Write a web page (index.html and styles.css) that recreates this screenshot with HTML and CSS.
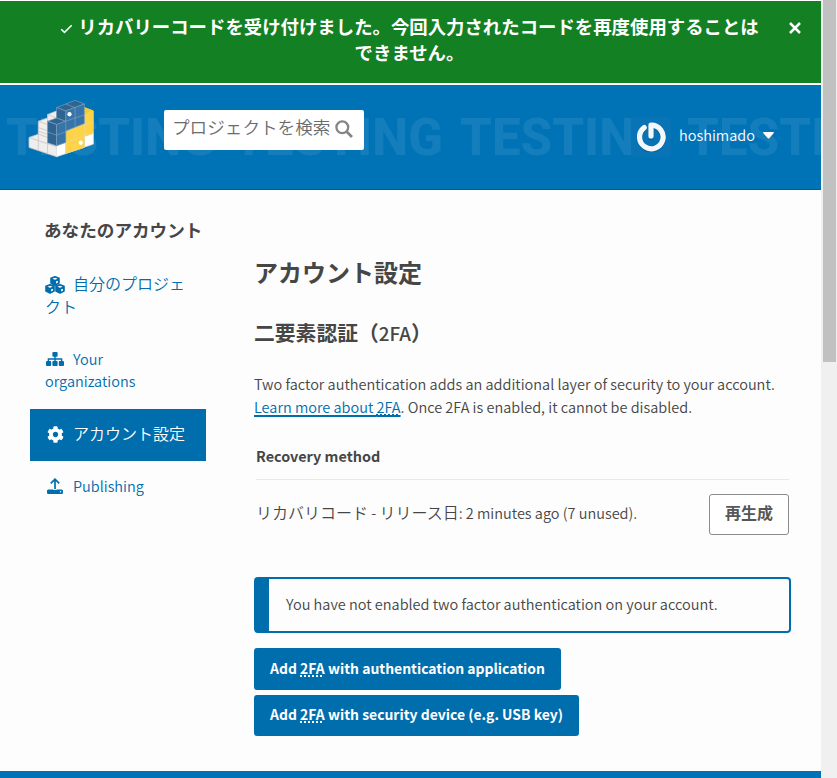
FILE: index.html
```html
<!DOCTYPE html>
<html lang="ja">
<head>
<meta charset="utf-8">
<title>アカウント設定</title>
<link rel="stylesheet" href="styles.css">
</head>
<body>
<div class="page">
  <div class="banner">
    <div class="banner-text"><svg class="check" viewBox="0 0 12 10"><path d="M.7 5.2 4 8.4 11.2 1.3" fill="none" stroke="#fff" stroke-width="1.6"/></svg>リカバリーコードを受け付けました。今回入力されたコードを再度使用することは<br>できません。</div>
    <svg class="close" viewBox="0 0 12 12"><path d="M1 1 11 11M11 1 1 11" stroke="#fff" stroke-width="2.5"/></svg>
  </div>
  <header class="header">
    <div class="watermark" aria-hidden="true"><span>TESTING</span><span>TESTING</span><span>TESTING</span><span>TESTING</span></div>
    <svg class="logo" viewBox="24 27 202 176">
      <g stroke="#c5c5c9" stroke-width="2.4" stroke-linejoin="round">
        <path fill="#efeeec" d="M27 142 55 132V93L83 83V73L110 62V200L27 172Z"/>
        <path fill="#fff" stroke="#e4e4e4" d="M110 167 221 129V162L110 200Z"/>
        <path fill="#ffd343" stroke="#f3d36c" d="M138 124 194 100V52L221 62V129L194 138V172L138 190Z"/>
        <path fill="#f7c92b" stroke="none" d="M194 51 221 61 194 71Z"/>
        <path fill="none" d="M27 142 110 170M55 132 83 142M55 132V181M55 93 83 103M83 73 110 83M55 112 83 122M83 73V191M55 123 83 133"/>
        <path fill="none" stroke="#e8d9a0" stroke-width="2" d="M138 157 221 129M166 112V181M194 71V172M194 105 221 96M138 124V190"/>
        <g stroke="#7d9fbd" stroke-width="2">
        <path fill="#2f6491" d="M83 93 110 83 138 93 110 103ZM110 52 166 30 194 41 138 62Z"/>
        <path fill="#2f6491" d="M83 93 110 103V167L83 158ZM110 52 138 62V93L110 83Z"/>
        <path fill="#3775a9" d="M110 103 138 93V62L194 41V100L138 122V157L110 167Z"/>
        <path fill="none" d="M83 126 110 135 138 125M138 41 166 52V111M138 93 194 74M138 93V124"/>
        </g>
      </g>
      <circle cx="149" cy="72" r="6.5" fill="#fff"/><circle cx="183" cy="158" r="6.5" fill="#fff"/>
    </svg>
    <div class="search"><span>プロジェクトを検索</span><svg viewBox="0 0 18 18"><circle cx="7.3" cy="7.3" r="5.9" fill="none" stroke="#858585" stroke-width="2.3"/><path d="m11.5 11.5 5.5 5.5" stroke="#858585" stroke-width="2.6"/></svg></div>
    <div class="user">
      <div class="avatar"><svg viewBox="0 0 30 30"><path d="M8.2 5.6A11.8 11.8 0 1 0 15 3.2V14.5" transform="translate(0 1)" fill="none" stroke="#0a5a90" stroke-opacity=".5" stroke-width="5.6" stroke-linecap="round"/><path d="M8.2 5.6A11.8 11.8 0 1 0 15 3.2V14" fill="none" stroke="#f6f7f8" stroke-width="5.2" stroke-linecap="round" stroke-linejoin="round"/></svg></div>
      <span class="name">hoshimado</span>
      <svg class="caret" viewBox="0 0 11 7"><path d="M.8 0H10.2Q11.4.3 10.6 1.2L6.2 6.2Q5.5 6.8 4.8 6.2L.4 1.2Q-.4.3.8 0Z" fill="#fff"/></svg>
    </div>
  </header>
  <div class="content">
    <nav class="sidebar">
      <h3>あなたのアカウント</h3>
      <a class="projects"><svg class="icon cubes" viewBox="0 0 20 18"><g fill="#006dad" stroke="#006dad" stroke-width="1.6" stroke-linejoin="round"><path d="M10 .8 14 2.3V7L10 9 6 7V2.3ZM5 8.8 9 10.3V15L5 17 1 15V10.3ZM15 8.8 19 10.3V15L15 17 11 15V10.3Z"/></g><g fill="#fdfdfd"><path d="M10 1.7 12.6 2.7 10 3.7 7.4 2.7ZM5 9.7 7.6 10.7 5 11.7 2.4 10.7ZM15 9.7 17.6 10.7 15 11.7 12.4 10.7ZM11 5.6 13 4.8V6.5L11 7.5ZM6 13.6 8 12.8V14.5L6 15.5ZM16 13.6 18 12.8V14.5L16 15.5Z"/></g></svg><span class="ja">自分のプロジェクト</span></a>
      <a class="orgs"><svg class="icon org" viewBox="0 0 18 14"><g fill="#006dad"><rect x="6.4" width="5.2" height="4.8" rx="1"/><rect y="9" width="5.2" height="5" rx="1"/><rect x="6.4" y="9" width="5.2" height="5" rx="1"/><rect x="12.8" y="9" width="5.2" height="5" rx="1"/></g><path d="M9 4V10M2.4 10V7H15.6V10" fill="none" stroke="#006dad" stroke-width="1.4"/></svg>Your organizations</a>
      <a class="active"><svg class="icon cog" viewBox="0 0 512 512"><path fill="#fff" d="M487.4 315.7l-42.6-24.6c4.3-23.2 4.3-47 0-70.2l42.6-24.6c4.9-2.8 7.1-8.6 5.5-14-11.1-35.6-30-67.8-54.7-94.6-3.8-4.1-10-5.1-14.8-2.3L380.8 110c-17.9-15.4-38.5-27.3-60.8-35.1V25.8c0-5.6-3.9-10.5-9.4-11.7-36.7-8.2-74.3-7.8-109.2 0-5.5 1.2-9.4 6.1-9.4 11.7V75c-22.2 7.9-42.8 19.8-60.8 35.1L88.7 85.5c-4.9-2.8-11-1.9-14.8 2.3-24.7 26.7-43.6 58.9-54.7 94.6-1.7 5.4.6 11.2 5.5 14L67.3 221c-4.3 23.2-4.3 47 0 70.2l-42.6 24.6c-4.9 2.8-7.1 8.6-5.5 14 11.1 35.6 30 67.8 54.7 94.6 3.8 4.1 10 5.1 14.8 2.3l42.6-24.6c17.9 15.4 38.5 27.3 60.8 35.1v49.2c0 5.6 3.9 10.5 9.4 11.7 36.7 8.2 74.3 7.8 109.2 0 5.5-1.2 9.4-6.1 9.4-11.7v-49.2c22.2-7.9 42.8-19.8 60.8-35.1l42.6 24.6c4.9 2.8 11 1.9 14.8-2.3 24.7-26.7 43.6-58.9 54.7-94.6 1.5-5.5-.7-11.3-5.6-14.1zM256 336c-44.1 0-80-35.9-80-80s35.9-80 80-80 80 35.9 80 80-35.9 80-80 80z"/></svg><span class="ja">アカウント設定</span></a>
      <a class="publishing"><svg class="icon upload" viewBox="0 0 16 16"><path d="M8 11V1.4M3.8 5.4 8 1.2 12.2 5.4" fill="none" stroke="#006dad" stroke-width="1.7"/><path fill="#006dad" d="M1.3 11.4H6Q8 12.6 10 11.4H14.7Q16 11.5 16 12.7V14.7Q16 16 14.7 16H1.3Q0 16 0 14.7V12.7Q0 11.5 1.3 11.4Z"/><circle cx="13.6" cy="13.7" r=".8" fill="#fdfdfd"/></svg>Publishing</a>
    </nav>
    <main>
      <h1>アカウント設定</h1>
      <h2>二要素認証（<span>2FA</span>）</h2>
      <p>Two factor authentication adds an additional layer of security to your account.<br><a class="link">Learn more about <abbr>2FA</abbr></a>. Once 2FA is enabled, it cannot be disabled.</p>
      <div class="table">
        <div class="th">Recovery method</div>
        <div class="row"><div><span class="ja">リカバリコード</span> - <span class="ja">リリース日</span>: 2 minutes ago (7 unused).</div><button>再生成</button></div>
      </div>
      <div class="callout">You have not enabled two factor authentication on your account.</div>
      <a class="btn app">Add <abbr>2FA</abbr> with authentication application</a>
      <a class="btn device">Add <abbr>2FA</abbr> with security device (e.g. USB key)</a>
    </main>
  </div>
  <footer></footer>
</div>
<div class="scrollbar"><div class="thumb"></div></div>
</body>
</html>
```
FILE: styles.css
```css
* { box-sizing: border-box; }
body { margin: 0; width: 837px; height: 778px; display: flex; overflow: hidden; background: #fdfdfd; color: #464646; font: 350 14.5px/23px "Noto Sans CJK JP", sans-serif; }
svg { display: block; }
h1, h2, h3, p { margin: 0; }
.page { width: 821px; height: 778px; display: flex; flex-direction: column; padding-top: 1px; }
.ja { font-size: 16px; }
.banner { height: 82px; flex: none; background: #148024; color: #fff; padding: 12px 20px 0 60px; display: flex; position: relative; }
.banner-text { width: 699px; white-space: nowrap; text-align: center; font-size: 18.4px; line-height: 26px; font-weight: 700; }
.check { display: inline-block; width: 13px; height: 10px; margin-right: 5px; }
.close { position: absolute; left: 789px; top: 21px; width: 12px; height: 12px; }
.header { height: 105px; margin-top: 2px; flex: none; background: #0073b7; border-bottom: 1px solid #006199; position: relative; display: flex; align-items: flex-start; overflow: hidden; }
.watermark { position: absolute; left: 6px; top: 23px; display: flex; color: #147dbc; font: 800 51px/60px Roboto, sans-serif; }
.watermark span { width: 227px; flex: none; }
.logo { width: 67px; height: 59px; margin: 14px 0 0 28px; position: relative; }
.search { position: relative; width: 200px; height: 40px; margin: 25px 0 0 69px; border-radius: 2px; background: #fff; display: flex; padding: 8px 0 0 8px; font-size: 17.6px; line-height: 18px; color: #6b6b6b; white-space: nowrap; }
.search svg { width: 18px; height: 18px; margin: 2px 0 0 5px; }
.user { position: relative; display: flex; margin: 32px 0 0 267px; color: #fff; }
.avatar { width: 40px; height: 40px; border-radius: 3px; background: #0873b5; padding: 5px 0 0 5px; }
.avatar svg { width: 30px; height: 30px; }
.name { margin: 6px 0 0 8px; }
.caret { width: 11px; height: 7px; margin: 15px 0 0 8px; }
.content { height: 581px; display: flex; }
.sidebar { width: 176px; margin-left: 30px; display: flex; flex-direction: column; color: #006dad; }
.sidebar h3 { padding: 27px 0 0 14px; font-size: 17.6px; line-height: 25px; font-weight: 700; color: #464646; white-space: nowrap; }
.sidebar a { padding: 14px 15px 0; line-height: 22px; }
.icon { display: inline-block; }
.sidebar .projects { margin-top: 16px; height: 76px; line-height: 23px; }
.sidebar .orgs { height: 75px; }
.sidebar .active { height: 52px; background: #006dad; color: #fff; padding-top: 13px; line-height: 23px; }
.sidebar .publishing { padding-top: 14px; }
.cubes { width: 20px; height: 18px; margin-right: 8px; vertical-align: -4px; }
.org { width: 18px; height: 14px; margin: 0 9px 0 1px; vertical-align: -1px; }
.cog { width: 17px; height: 17px; margin: 0 9.5px 0 1.5px; vertical-align: -3px; }
.upload { width: 16px; height: 16px; margin: 0 10px 0 2px; vertical-align: -2px; }
main { margin-left: 48px; width: 537px; }
h1 { margin-top: 65px; font-size: 24px; line-height: 34px; font-weight: 700; }
h2 { margin-top: 27px; font-size: 20.8px; line-height: 32px; font-weight: 700; }
h2 span { font-size: 18.8px; font-weight: 500; }
p { margin-top: 23px; white-space: nowrap; }
.link { color: #006dad; text-decoration: underline 2px; text-underline-offset: 2px; text-decoration-skip-ink: none; }
abbr { text-decoration: underline dotted 1.5px; text-underline-offset: 1px; text-decoration-skip-ink: none; }
.table { padding: 26px 2px 0; }
.th { height: 36px; font-size: 14.4px; font-weight: 700; border-bottom: 1px solid #e8e8e8; }
.row { display: flex; justify-content: space-between; padding-top: 14px; white-space: nowrap; }
.row > div { padding-top: 7px; }
button { width: 80px; height: 41px; padding: 0 0 4px; border: 1px solid #8c8c8c; border-radius: 3px; background: #fff; color: #575757; font: 700 16px/23px "Noto Sans CJK JP", sans-serif; }
.callout { margin-top: 42px; height: 56px; border: 2px solid #006dad; border-left-width: 15px; border-radius: 4px; padding: 13px 17px; white-space: nowrap; }
.btn { display: block; height: 42px; border-radius: 3px; background: #006dad; color: #fff; font-size: 13.95px; font-weight: 700; padding: 8px 16px; white-space: nowrap; }
.app { width: 307px; margin-top: 15px; padding-top: 9px; }
.device { width: 325px; height: 41px; margin-top: 5px; }
footer { height: 7px; background: #0073b7; }
.scrollbar { width: 16px; background: #f0f0f0; padding-left: 2px; }
.thumb { width: 13px; height: 362px; background: #c1c1c1; }
```
